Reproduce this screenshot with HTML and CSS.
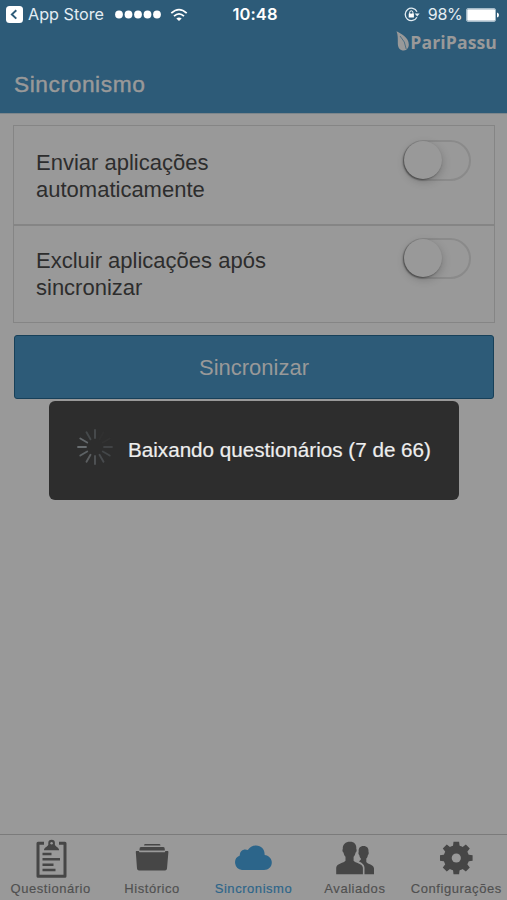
FILE: index.html
```html
<!DOCTYPE html>
<html lang="pt-BR">
<head>
<meta charset="utf-8">
<title>Sincronismo</title>
<link rel="stylesheet" href="styles.css">
</head>
<body>
<div class="app">
  <header class="header">
    <div class="status">
      <div class="status-left">
        <svg class="back" width="17" height="17" viewBox="0 0 17 17"><rect width="17" height="17" rx="3.5" fill="#fff"/><path d="M10.3 4.2 5.9 8.4l4.4 4.2" fill="none" stroke="#2d5b78" stroke-width="2"/></svg>
        <span class="store">App Store</span>
        <svg class="signal" width="46" height="9" viewBox="0 0 46 9" fill="#fff"><circle cx="4" cy="4.5" r="3.9"/><circle cx="13.5" cy="4.5" r="3.9"/><circle cx="23" cy="4.5" r="3.9"/><circle cx="32.5" cy="4.5" r="3.9"/><circle cx="42" cy="4.5" r="3.9"/></svg>
        <svg class="wifi" width="18" height="14" viewBox="0 0 18 14" fill="none" stroke="#fff" stroke-width="1.8"><path d="M1.300 5.2Q9-2 16.700 5.2M4 8.2Q9 3.5 14 8.2"/><path d="M6.3 10.4Q9 8.400 11.7 10.4L9 13Z" fill="#fff" stroke="none"/></svg>
      </div>
      <span class="time">10:48</span>
      <div class="status-right">
        <svg class="lock" width="16" height="15" viewBox="0 0 16 15"><path d="M12.9 10.3A6.2 6.2 0 1 1 13 4.7" fill="none" stroke="#e4edf3" stroke-width="1.3"/><path d="M10.7 6.5h5l-2.5 3z" fill="#e4edf3"/><path d="M4.7 6.6h5.2v3.9H4.7z" fill="#fff"/><path d="M5.7 7V5.4a1.6 1.6 0 0 1 3.2 0V7" fill="none" stroke="#fff"/></svg>
        <span class="percent">98%</span>
        <svg class="battery" width="33" height="14" viewBox="0 0 33 14"><rect x=".5" y=".5" width="29" height="13" rx="1.5" fill="none" stroke="#a5bbc9"/><rect x="1.2" y="1.3" width="27.8" height="11.4" rx=".7" fill="#fff"/><path d="M31 4.5q2 .5 2 2.5t-2 2.5z" fill="#fff"/></svg>
      </div>
    </div>
    <div class="brand">
      <svg width="12" height="20" viewBox="0 0 12 20"><path d="M-.5.3C4.500 3 11.800 6.500 11.800 13.500c0 3.200-1.700 5.800-5 6C3 19.500.9 17 .8 12.500.8 8 1 4-.5.300z" fill="#999"/><path d="M3 5q5.500 5.500 6.200 13" fill="none" stroke="#2d5b78" stroke-width=".7"/></svg>
      <span class="brand-name">PariPassu</span>
    </div>
    <h1 class="title">Sincronismo</h1>
  </header>
  <main class="content">
    <div class="list">
      <div class="row"><span class="label">Enviar aplicações<br>automaticamente</span><span class="toggle"><span class="knob"></span></span></div>
      <div class="row"><span class="label">Excluir aplicações após<br>sincronizar</span><span class="toggle"><span class="knob"></span></span></div>
    </div>
    <button class="sync">Sincronizar</button>
  </main>
  <nav class="tabs">
    <div class="tab">
      <svg width="32" height="40" viewBox="0 0 32 40"><path d="M9 4.300H3v33h27v-33H24" fill="none" stroke="#464646" stroke-width="3" stroke-linejoin="round"/><path d="M9 11.300c0-3 3.500-3.300 4.300-5.500V4a3.300 3.300 0 0 1 6.600 0v1.800c.7 2.200 4.200 2.500 4.200 5.500z" fill="#464646"/><circle cx="16.600" cy="4.300" r="1.200" fill="#999"/><path d="M7.500 15h9M7.500 20.300h17.500M7.500 25.700h11M7.500 31h13" stroke="#464646" stroke-width="2.500"/></svg>
      <span>Questionário</span>
    </div>
    <div class="tab">
      <svg width="34" height="40" viewBox="0 0 34 40" fill="#464646"><path d="M10 5h14.500q1 0 1 1.500H9Q9 5 10 5zM6 7.900h22.300q1.500 0 1.500 2.400v1.300H4.500v-1.300q0-2.400 1.500-2.400zM1.500 12.100h2.300l.6 1.100h25.400l.6-1.100h2.300q.8 0 .7.900L32 29.500q-.2 2-2 2H4q-1.800 0-2-2L.8 13q-.1-.9.700-.9z"/></svg>
      <span>Histórico</span>
    </div>
    <div class="tab active">
      <svg width="38" height="40" viewBox="0 0 38 40"><path d="M8 31a7.600 7.600 0 0 1-2.200-14.600c0-5 4.500-7 8-5.300C15.500 8.200 18.300 6.500 22 6.500c5.500 0 9 4.300 8.600 9.500 4 .5 7.200 3.600 7.200 7.500 0 4.300-3.300 7.500-7.800 7.500z" fill="#2c658a"/></svg>
      <span>Sincronismo</span>
    </div>
    <div class="tab">
      <svg width="40" height="40" viewBox="0 0 40 40" fill="#464646"><path d="M15 2.700c4.400 0 6.700 2.700 6.300 7.200.8.800.2 3-.7 3.700-.4 2-1 3.200-2 4.200v4c1.500 2.200 8.800 2.500 9.300 7v6.500H1.200v-6.500c.5-4.500 7.800-4.800 9.300-7v-4c-1-1-1.600-2.200-2-4.200-.9-.7-1.500-2.900-.7-3.700C7.400 5.400 10.600 2.700 15 2.700z"/><path d="M28.500 7c3.600 0 5.400 2.300 5 6 .6.700.2 2.400-.6 3-.3 1.700-.8 2.800-1.600 3.600v3.500c1.300 2.400 7.300 2.400 7.700 6.300v5.900h-9.500v-6.500c0-3.300-2.600-5-5.500-6.300l1.900-1.900v-1c-.8-.8-1.300-1.900-1.600-3.600-.8-.6-1.200-2.300-.6-3-.4-3.700 1.200-6 4.800-6z"/></svg>
      <span>Avaliados</span>
    </div>
    <div class="tab">
      <svg width="36" height="40" viewBox="0 0 36 40"><g fill="#464646" transform="translate(18.300 19)"><circle r="12.700"/><g id="teeth"><path id="pair" d="M-3.400-11-2.800-16.300h5.600l.6 5.300zM-3.400 11l.6 5.300h5.600L3.400 11z"/><use href="#pair" transform="rotate(45)"/></g><use href="#teeth" transform="rotate(90)"/><circle r="4.600" fill="#999"/></g></svg>
      <span>Configurações</span>
    </div>
  </nav>
  <div class="dialog" role="status">
    <svg class="spinner" width="38" height="38" viewBox="-19 -19 38 38" stroke-width="1.900" stroke-linecap="round"><path d="M0-9v-8" stroke="#484b4d"/><path d="M4.500-7.800l4-6.900" stroke="#303030"/><path d="M7.800-4.500l6.900-4" stroke="#323232"/><path d="M9 0h8" stroke="#414345"/><path d="M7.800 4.500l6.900 4" stroke="#434648"/><path d="M4.500 7.800l4 6.900" stroke="#484b4e"/><path d="M0 9v8" stroke="#505356"/><path d="M-4.500 7.800l-4 6.900" stroke="#5b5e60"/><path d="M-7.800 4.500l-6.900 4" stroke="#5d6265"/><path d="M-9 0h-8" stroke="#686d70"/><path d="M-7.800-4.500l-6.900-4" stroke="#63686b"/><path d="M-4.500-7.800l-4-6.900" stroke="#45494b"/></svg>
    <span class="message">Baixando questionários (7 de 66)</span>
  </div>
</div>
</body>
</html>
```
FILE: styles.css
```css
* { box-sizing: border-box; }
body { margin: 0; background: #999; font-family: "Liberation Sans", Arial, sans-serif; }
svg { display: block; flex: none; overflow: visible; }
.app { position: relative; height: 900px; display: flex; flex-direction: column; overflow: hidden; }

.header { height: 114px; background: #2d5b78; border-bottom: 1px solid #7d868b; display: flex; flex-direction: column; }
.status { height: 29px; padding: 0 8px 0 6px; display: grid; grid-template-columns: 1fr auto 1fr; align-items: center; color: #fff; font: 16.5px/29px Inter, sans-serif; }
.status-left, .status-right { display: flex; align-items: center; }
.status-right { justify-content: flex-end; }
.store { width: 76px; margin: 0 10.5px 0 5px; color: #e4edf3; font-size: 16.2px; white-space: nowrap; }
.wifi { margin-left: 9px; }
.time { padding-left: 5px; font-weight: 600; font-size: 16.500px; letter-spacing: .1px; }
.percent { margin: 0 3.5px 0 8px; color: #e4edf3; font-size: 16px; letter-spacing: -.3px; }
.brand { height: 23px; padding: 2px 10px 0 0; display: flex; justify-content: flex-end; align-items: flex-start; gap: 1px; color: #999; }
.brand-name { margin-top: -2px; font: bold 17.600px/26px "Open Sans", sans-serif; letter-spacing: .1px; }
.title { margin: 19px 0 0 14px; font-size: 22.700px; font-weight: 400; line-height: 27px; letter-spacing: .6px; color: #999; -webkit-text-stroke: .45px #999; }

.content { flex: 1; padding: 11px 12px 0 13px; }
.list { border: 1px solid #858585; height: 198px; }
.row { height: 98px; padding: 0 23px 0 22px; display: flex; justify-content: space-between; }
.row + .row { border-top: 2px solid #858585; }
.label { padding-top: 23px; font-size: 22px; line-height: 27px; color: #2d2d2d; }
.row + .row .label { padding-top: 21px; }
.toggle { width: 68px; height: 41px; margin-top: 14px; border: 2px solid #8a8a8a; border-radius: 21px; }
.knob { display: block; width: 38px; height: 38px; margin: -1px 0 0 -1px; border-radius: 50%; background: #999; box-shadow: -1px 1px 2px rgba(0,0,0,.42), 1px 3px 8px rgba(0,0,0,.18); }
.row + .row .toggle { margin-top: 12px; }
.sync { display: block; width: 480px; height: 64px; margin: 12px 0 0 1px; padding: 2px 0 0; border: 1px solid #174059; border-radius: 3px; background: #2d5b78; color: #999; font: 22px/26px "Liberation Sans", Arial, sans-serif; }

.tabs { height: 66px; border-top: 1px solid #7b7b7b; display: grid; grid-template-columns: repeat(5, 1fr); }
.tab { display: flex; flex-direction: column; align-items: center; padding-top: 4px; font-size: 13px; line-height: 16px; letter-spacing: .55px; color: #505050; -webkit-text-stroke: .15px currentColor; }
.tab span { margin: 2px 0 0; white-space: nowrap; }
.tab.active { color: #2c658a; }

.dialog { position: absolute; left: 49px; top: 401px; width: 410px; height: 99px; border-radius: 6px; background: #2d2d2d; display: flex; align-items: flex-start; padding: 27px 0 0 27px; color: #eee; }
.message { margin: 9px 0 0 14px; font-size: 20.650px; line-height: 26px; white-space: nowrap; -webkit-text-stroke: .2px #eee; }
```
